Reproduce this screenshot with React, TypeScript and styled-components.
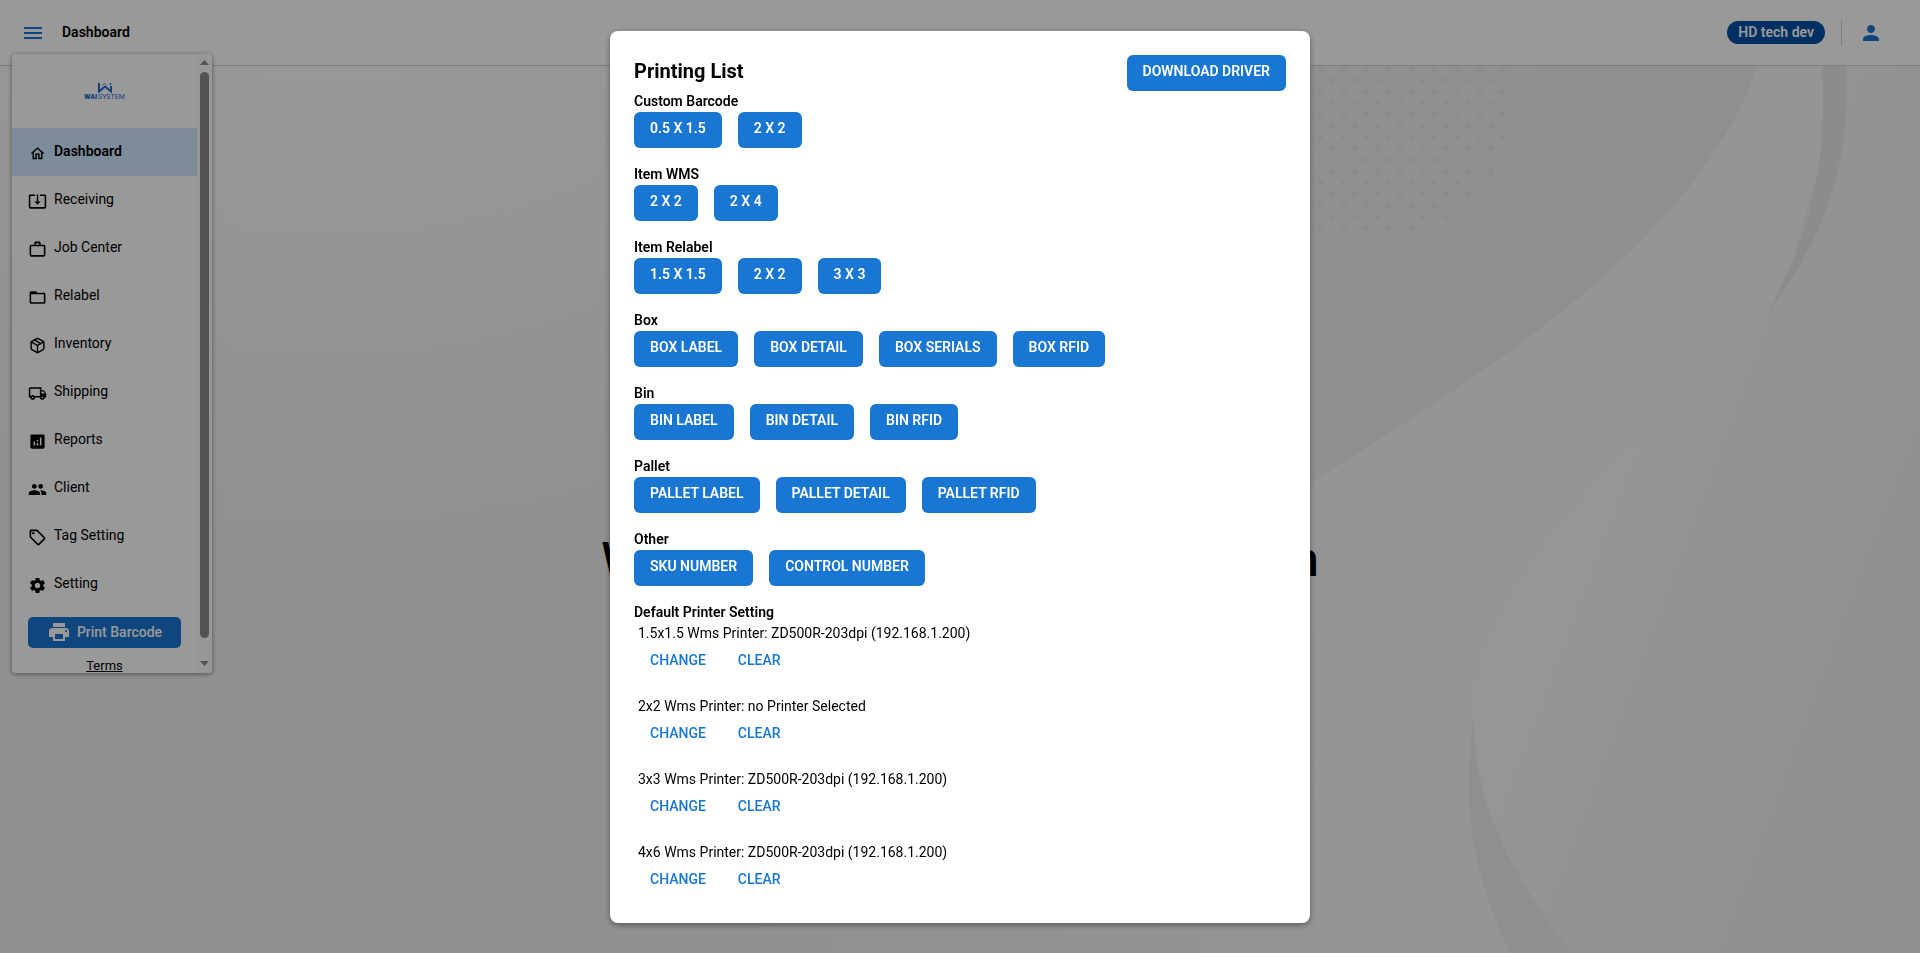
import React from "react";
import styled, { createGlobalStyle } from "styled-components";
import {
  MdAnalytics,
  MdFolderOpen,
  MdMenu,
  MdOutlineHome,
  MdOutlineLocalOffer,
  MdOutlineLocalShipping,
  MdOutlineSystemUpdateAlt,
  MdPeople,
  MdPerson,
  MdPrint,
  MdSettings,
  MdWorkOutline,
} from "react-icons/md";
import { FiPackage } from "react-icons/fi";

const GlobalStyle = createGlobalStyle`
  * { box-sizing: border-box; }
  body {
    margin: 0;
    font-family: Roboto, "Liberation Sans", sans-serif;
    font-size: 14px;
    line-height: 21px;
    color: #000;
  }
  button { font-family: inherit; cursor: pointer; }
`;

const Page = styled.div`
  position: relative;
  display: flex;
  flex-direction: column;
  min-height: 100vh;
  overflow: hidden;
`;

const Header = styled.header`
  display: flex;
  align-items: center;
  height: 66px;
  padding: 0 37px 0 21px;
  background: #fff;
  border-bottom: 1px solid #d0d0d2;
`;

const IconButton = styled.button`
  display: flex;
  padding: 0;
  border: 0;
  background: none;
  color: #1976d2;
`;

const PageTitle = styled.h1`
  flex: 1;
  margin: 0 0 0 17px;
  font-size: 14px;
  line-height: 21px;
  font-weight: 600;
`;

const UserChip = styled.span`
  padding: 1px 11px;
  border-radius: 12px;
  background: #0050a6;
  color: #fff;
  font-weight: 600;
`;

const Divider = styled.span`
  width: 1px;
  height: 26px;
  margin: 0 17px 0 16px;
  background: #d0d0d2;
`;

const Main = styled.main`
  position: relative;
  display: flex;
  flex: 1;
  align-items: center;
  justify-content: center;
  padding-top: 100px;
`;

const Backdrop = styled.svg`
  position: absolute;
  inset: 0;
  width: 100%;
  height: 100%;
`;

const Welcome = styled.h2`
  position: relative;
  margin: 0;
  font-size: 48px;
  line-height: 56px;
  font-weight: 500;
  white-space: nowrap;
`;

const Sidebar = styled.aside`
  position: absolute;
  top: 54px;
  left: 12px;
  display: flex;
  width: 200px;
  height: 65vh;
  overflow: hidden;
  border-radius: 4px;
  background: #fff;
  box-shadow: 0 1px 5px rgba(0, 0, 0, 0.45);
`;

const SidebarBody = styled.div`
  flex: 1;
  overflow: hidden;
`;

const Brand = styled.div`
  display: flex;
  flex-direction: column;
  align-items: center;
  height: 74px;
  padding-top: 29px;
`;

const BrandName = styled.div`
  display: flex;
  gap: 1px;
  font-size: 7px;
  line-height: 8px;
  color: #1d6bd0;
`;

const BrandBold = styled.span`
  font-weight: 900;
`;

const BrandLight = styled.span`
  font-weight: 400;
`;

const NavLink = styled.a<{ $active?: boolean }>`
  display: flex;
  align-items: center;
  gap: 7px;
  height: 48px;
  padding-left: 16px;
  background: ${(p) => (p.$active ? "#d2e9ff" : "transparent")};
  font-weight: ${(p) => (p.$active ? 600 : 400)};
  color: #000;
  text-decoration: none;
`;

const NavIcon = styled.span`
  display: flex;
  justify-content: center;
  width: 19px;
  padding-top: 2px;
`;

const NavText = styled.span`
  padding-bottom: 2px;
`;

const PrintButton = styled.button`
  display: flex;
  align-items: center;
  justify-content: center;
  gap: 6px;
  width: 153px;
  height: 31px;
  margin: 9px 16px 8px;
  padding: 0 0 2px;
  border: 0;
  border-radius: 5px;
  background: #1976d2;
  color: #fff;
  font-size: 14px;
  font-weight: 500;
`;

const Terms = styled.a`
  display: block;
  text-align: center;
  font-size: 13px;
  line-height: 20px;
  color: #000;
  text-decoration: underline;
`;

const ScrollTrack = styled.div`
  display: flex;
  flex-direction: column;
  align-items: center;
  justify-content: space-between;
  width: 15px;
  padding: 6px 0 7px;
  background: #fcfcfc;
`;

const Arrow = styled.svg`
  width: 9px;
  height: 5px;
`;

const Thumb = styled.div`
  flex: 1;
  width: 9px;
  margin: 7px 0 23px;
  border-radius: 5px;
  background: #8b8b8b;
`;

const Overlay = styled.div`
  position: fixed;
  inset: 0;
  display: flex;
  align-items: center;
  justify-content: center;
  background: rgba(0, 0, 0, 0.4);
`;

const Dialog = styled.section`
  width: 700px;
  max-width: 100%;
  max-height: 100%;
  overflow: auto;
  padding: 24px;
  border-radius: 8px;
  background: #fff;
  box-shadow: 0 2px 6px rgba(0, 0, 0, 0.4);
`;

const DialogHead = styled.div`
  display: flex;
  align-items: flex-start;
  justify-content: space-between;
`;

const DialogTitle = styled.h2`
  margin: 0;
  font-size: 20px;
  line-height: 32px;
  font-weight: 700;
`;

const Group = styled.div`
  margin-bottom: 16px;
`;

const GroupLabel = styled.h3`
  margin: 0;
  font-size: 14px;
  line-height: 21px;
  font-weight: 600;
`;

const ButtonRow = styled.div<{ $gap: number }>`
  display: flex;
  gap: ${(p) => p.$gap}px;
`;

const Button = styled.button<{ $plain?: boolean }>`
  padding: 6px 16px 9px;
  border: 0;
  border-radius: 6px;
  background: ${(p) => (p.$plain ? "transparent" : "#1976d2")};
  color: ${(p) => (p.$plain ? "#1976d2" : "#fff")};
  font-size: 14px;
  line-height: 21px;
  font-weight: ${(p) => (p.$plain ? 500 : 600)};
  text-transform: uppercase;
`;

const Printers = styled.div`
  display: flex;
  flex-direction: column;
  gap: 16px;
`;

const PrinterName = styled.p`
  margin: 0 4px;
`;

const navItems = [
  { label: "Dashboard", icon: <MdOutlineHome size={17} /> },
  { label: "Receiving", icon: <MdOutlineSystemUpdateAlt size={19} /> },
  { label: "Job Center", icon: <MdWorkOutline size={19} /> },
  { label: "Relabel", icon: <MdFolderOpen size={19} /> },
  { label: "Inventory", icon: <FiPackage size={17} /> },
  { label: "Shipping", icon: <MdOutlineLocalShipping size={19} /> },
  { label: "Reports", icon: <MdAnalytics size={19} /> },
  { label: "Client", icon: <MdPeople size={19} /> },
  { label: "Tag Setting", icon: <MdOutlineLocalOffer size={19} /> },
  { label: "Setting", icon: <MdSettings size={19} /> },
];

const groups = [
  { label: "Custom Barcode", buttons: ["0.5 x 1.5", "2 x 2"] },
  { label: "Item WMS", buttons: ["2 x 2", "2 x 4"] },
  { label: "Item Relabel", buttons: ["1.5 x 1.5", "2 x 2", "3 x 3"] },
  { label: "Box", buttons: ["Box Label", "Box Detail", "Box Serials", "Box RFID"] },
  { label: "Bin", buttons: ["Bin Label", "Bin Detail", "Bin RFID"] },
  { label: "Pallet", buttons: ["Pallet Label", "Pallet Detail", "Pallet RFID"] },
  { label: "Other", buttons: ["SKU Number", "Control Number"] },
];

const printers = [
  "1.5x1.5 Wms Printer: ZD500R-203dpi (192.168.1.200)",
  "2x2 Wms Printer: no Printer Selected",
  "3x3 Wms Printer: ZD500R-203dpi (192.168.1.200)",
  "4x6 Wms Printer: ZD500R-203dpi (192.168.1.200)",
];

// Number of dots in each row of the halftone patch.
const dotRows = [9, 8, 9, 8, 9, 8, 9, 8, 8, 8, 7, 7, 6, 6, 5];

function WaveArt() {
  return (
    <Backdrop viewBox="0 66 1920 887" preserveAspectRatio="xMidYMid slice" aria-hidden="true">
      <defs>
        <radialGradient id="glow" gradientUnits="userSpaceOnUse" cx="330" cy="-420" r="1000">
          <stop offset="0.48" stopColor="#fdfdfd" />
          <stop offset="0.72" stopColor="#f8f8f8" />
          <stop offset="0.86" stopColor="#f2f3f3" />
          <stop offset="1" stopColor="#f0f1f2" />
        </radialGradient>
        <linearGradient id="band" gradientUnits="userSpaceOnUse" x1="760" y1="953" x2="1400" y2="760">
          <stop offset="0" stopColor="#f0f1f2" />
          <stop offset="1" stopColor="#f9f9f9" />
        </linearGradient>
        <linearGradient id="right" gradientUnits="userSpaceOnUse" x1="1560" y1="540" x2="1880" y2="660">
          <stop offset="0" stopColor="#fbfbfb" />
          <stop offset="0.5" stopColor="#f4f4f4" />
          <stop offset="1" stopColor="#eff1f1" />
        </linearGradient>
      </defs>
      <rect y="66" width="1920" height="887" fill="url(#glow)" />
      <rect x="1000" y="66" width="920" height="600" fill="#f0f0f0" />
      {dotRows.map((count, row) =>
        Array.from({ length: count }, (_, i) => (
          <circle
            key={`${row}-${i}`}
            cx={1320.7 + (row % 2) * 11.4 + i * 22.7}
            cy={69 + row * 11.35}
            r="2.6"
            fill="#e7e9ea"
          />
        ))
      )}
      <path d="M1535 66C1530 250 1440 300 1322 476C1480 376 1700 240 1757 66Z" fill="#eeeef1" />
      <path
        d="M1757 66C1700 240 1480 376 1322 476C1220 540 1000 600 700 700V953H1600L1847 66Z"
        fill="url(#band)"
      />
      <path
        d="M1847 66C1850 180 1820 240 1768 312C1700 390 1640 430 1589 492C1510 580 1474 650 1474 717C1476 790 1510 870 1571 953H1920V66Z"
        fill="url(#right)"
      />
      <path d="M1822 66C1826 170 1814 225 1768 312C1826 236 1850 165 1847 66Z" fill="#e7e9eb" />
      <path d="M1474 717C1462 800 1470 870 1510 953H1571C1510 870 1472 800 1474 717Z" fill="#eeeef1" />
    </Backdrop>
  );
}

export default function App() {
  return (
    <>
      <GlobalStyle />
      <Page>
        <Header>
          <IconButton aria-label="Toggle menu">
            <MdMenu size={24} />
          </IconButton>
          <PageTitle>Dashboard</PageTitle>
          <UserChip>HD tech dev</UserChip>
          <Divider />
          <IconButton aria-label="Account">
            <MdPerson size={24} />
          </IconButton>
        </Header>
        <Main>
          <WaveArt />
          <Welcome>Welcome to Wai System Platform</Welcome>
        </Main>
        <Sidebar>
          <SidebarBody>
            <Brand>
              <svg width="14" height="10" viewBox="0 0 14 10" aria-hidden="true">
                <path d="M1 0V8.500L7 3.500L13 8.500V3" fill="none" stroke="#1d6bd0" strokeWidth="2" />
                <path d="M4 2.500L7 0.500L9 2.500" fill="none" stroke="#6f9bd4" strokeWidth="1" />
                <circle cx="12.500" cy="1" r="1" fill="#1d6bd0" />
              </svg>
              <BrandName>
                <BrandBold>WAI</BrandBold>
                <BrandLight>SYSTEM</BrandLight>
              </BrandName>
            </Brand>
            <nav>
              {navItems.map((item, i) => (
                <NavLink key={item.label} href="#" $active={i === 0}>
                  <NavIcon>{item.icon}</NavIcon>
                  <NavText>{item.label}</NavText>
                </NavLink>
              ))}
            </nav>
            <PrintButton>
              <MdPrint size={24} />
              Print Barcode
            </PrintButton>
            <Terms href="#">Terms</Terms>
          </SidebarBody>
          <ScrollTrack aria-hidden="true">
            <Arrow viewBox="0 0 9 5">
              <path d="M0 5L4.500 0L9 5Z" fill="#8b8b8b" />
            </Arrow>
            <Thumb />
            <Arrow viewBox="0 0 9 5">
              <path d="M0 0L4.500 5L9 0Z" fill="#8b8b8b" />
            </Arrow>
          </ScrollTrack>
        </Sidebar>
      </Page>
      <Overlay>
        <Dialog role="dialog" aria-modal="true" aria-labelledby="printing-title">
          <DialogHead>
            <DialogTitle id="printing-title">Printing List</DialogTitle>
            <Button>Download Driver</Button>
          </DialogHead>
          {groups.map((group) => (
            <Group key={group.label}>
              <GroupLabel>{group.label}</GroupLabel>
              <ButtonRow $gap={16}>
                {group.buttons.map((label) => (
                  <Button key={label}>{label}</Button>
                ))}
              </ButtonRow>
            </Group>
          ))}
          <GroupLabel>Default Printer Setting</GroupLabel>
          <Printers>
            {printers.map((name) => (
              <div key={name}>
                <PrinterName>{name}</PrinterName>
                <ButtonRow $gap={0}>
                  <Button $plain>Change</Button>
                  <Button $plain>Clear</Button>
                </ButtonRow>
              </div>
            ))}
          </Printers>
        </Dialog>
      </Overlay>
    </>
  );
}
